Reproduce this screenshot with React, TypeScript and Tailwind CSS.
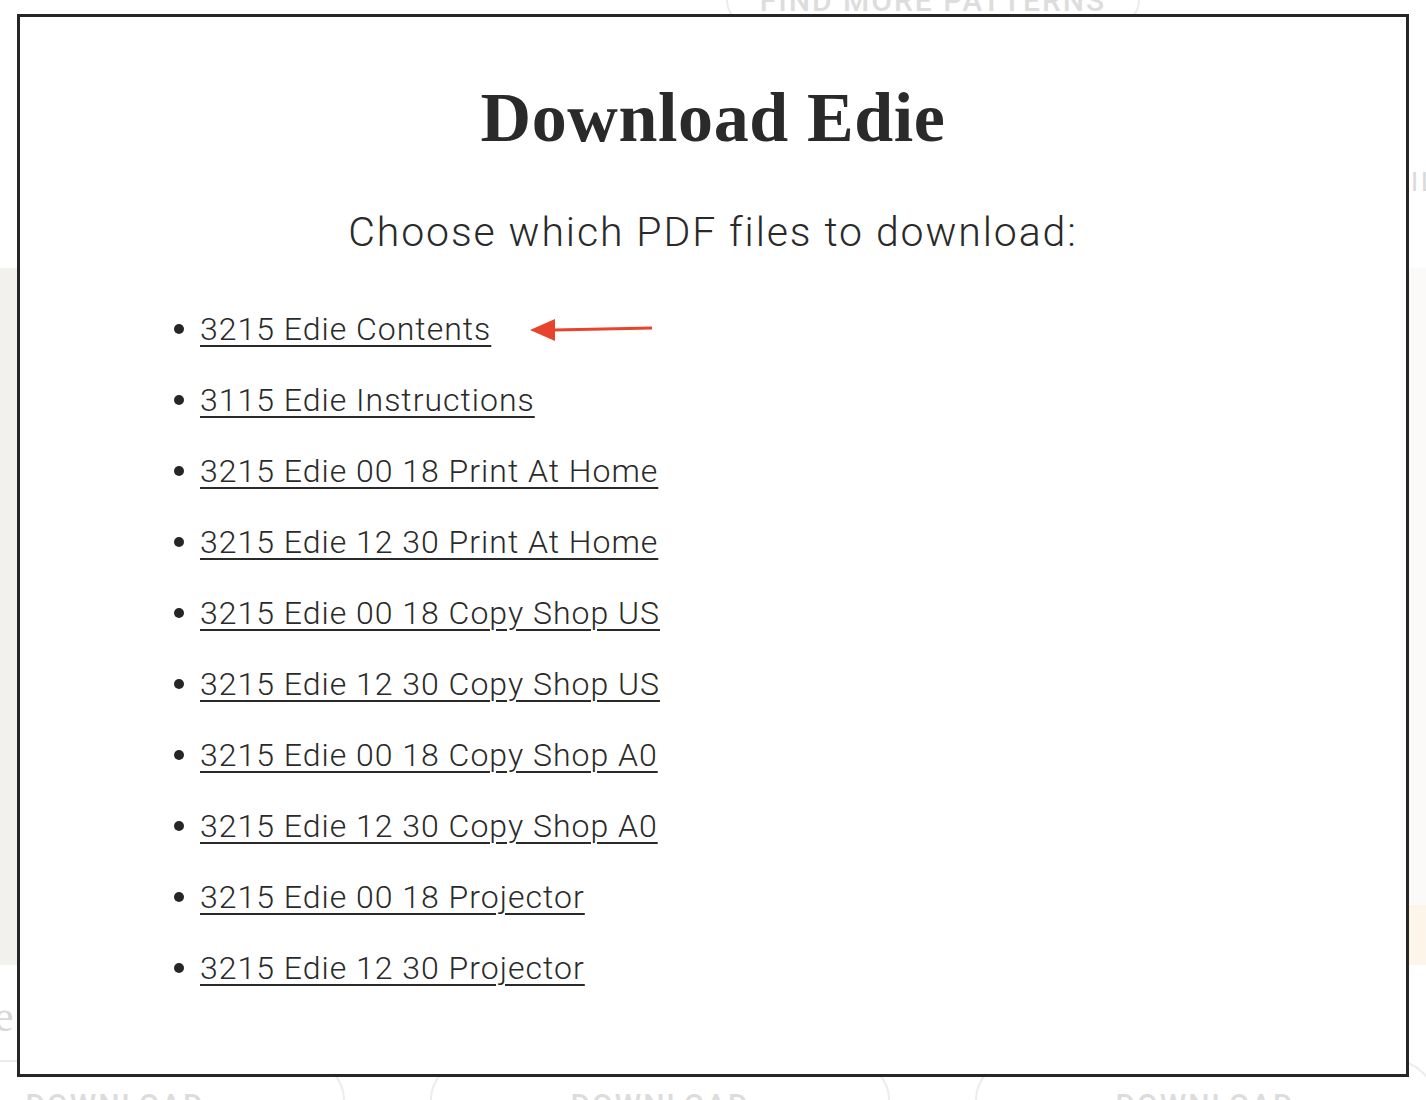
import React from 'react';

const files = [
  '3215 Edie Contents',
  '3115 Edie Instructions',
  '3215 Edie 00 18 Print At Home',
  '3215 Edie 12 30 Print At Home',
  '3215 Edie 00 18 Copy Shop US',
  '3215 Edie 12 30 Copy Shop US',
  '3215 Edie 00 18 Copy Shop A0',
  '3215 Edie 12 30 Copy Shop A0',
  '3215 Edie 00 18 Projector',
  '3215 Edie 12 30 Projector',
];

const roboto = { fontFamily: 'Roboto, "Liberation Sans", sans-serif' };

function RedArrow() {
  return (
    <svg width="124" height="26" viewBox="0 0 124 26" className="ml-[39px] shrink-0 translate-y-[1px]">
      <path d="M122 9.5 L24 11.5 L24 14.5 L122 12.5 Z" fill="#e8432b" />
      <path d="M0 13 L25 2 L25 24 Z" fill="#e8432b" />
    </svg>
  );
}

function GhostPill({ className = '' }: { className?: string }) {
  return (
    <div
      className={`flex h-[80px] w-[460px] shrink-0 justify-center rounded-[40px] border-2 border-[#ececec] pt-[28px] text-[30px] font-medium leading-none tracking-[2px] text-[#dcdcdc] ${className}`}
    >
      DOWNLOAD
    </div>
  );
}

export default function App() {
  return (
    <div className="relative h-[1100px] w-[1426px] overflow-hidden bg-white">
      {/* faded page behind the modal */}
      <div className="flex h-full flex-col" style={roboto}>
        <div className="-mt-[26px] flex justify-end pr-[286px]">
          <div className="flex h-[52px] w-[414px] items-center justify-center rounded-full border-2 border-[#ececec] text-[30px] font-medium tracking-[2px] text-[#dddddd]">
            FIND MORE PATTERNS
          </div>
        </div>
        <div className="mt-[137px] flex justify-end text-[26px] tracking-[3px] text-[#d9d9d9]">
          <span className="-mr-[12px]">IL</span>
        </div>
        <div className="mt-[66px] flex justify-between">
          <div className="h-[697px] w-[20px] bg-[#f3f1ee]" />
          <div className="flex h-[697px] w-[20px] flex-col">
            <div className="flex-1 bg-[#fbfaf8]" />
            <div className="h-[60px] bg-[#fdf5ea]" />
          </div>
        </div>
        <div className="mt-[30px] text-[44px] leading-none text-[#d8d8d8]" style={{ fontFamily: '"Liberation Serif", serif' }}>
          <span className="-ml-[6px]">e</span>
        </div>
        <div className="mt-[21px] flex gap-[85px]">
          <GhostPill className="-ml-[115px]" />
          <GhostPill />
          <GhostPill />
        </div>
      </div>

      {/* modal */}
      <div className="absolute left-[17px] top-[14px] h-[1063px] w-[1392px] border-[3px] border-[#262626] bg-white text-[#2a2a2a]">
        <h1
          className="mt-[66px] text-center text-[70px] font-bold leading-none tracking-[0.6px]"
          style={{ fontFamily: '"Liberation Serif", "DejaVu Serif", serif' }}
        >
          Download Edie
        </h1>
        <p className="mt-[59px] text-center text-[41px] font-light leading-none tracking-[1.9px]" style={roboto}>
          Choose which PDF files to download:
        </p>
        <ul className="mt-[55px] flex flex-col gap-[30px] pl-[154px]" style={roboto}>
          {files.map((f, i) => (
            <li key={f} className="flex h-[41px] items-center text-[32px] font-light leading-none tracking-[1px]">
              <span className="mr-[16px] h-[10px] w-[10px] shrink-0 rounded-full bg-[#262626]" />
              <a href="#" className="underline decoration-2 underline-offset-[5px]">
                {f}
              </a>
              {i === 0 && <RedArrow />}
            </li>
          ))}
        </ul>
      </div>
    </div>
  );
}
